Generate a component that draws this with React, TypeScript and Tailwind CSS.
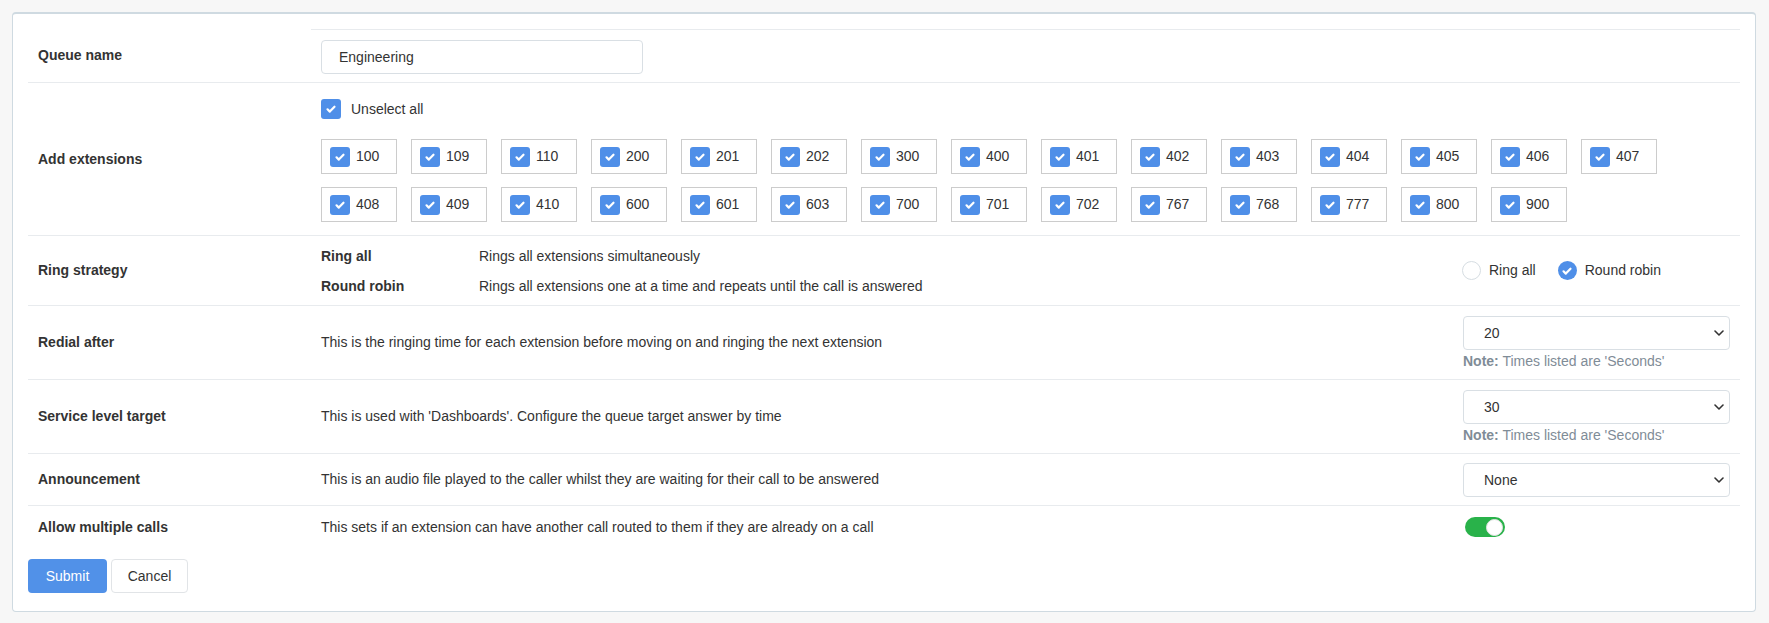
import { useState } from "react"

const extensions = [
  "100", "109", "110", "200", "201", "202", "300", "400", "401", "402", "403", "404", "405", "406", "407",
  "408", "409", "410", "600", "601", "603", "700", "701", "702", "767", "768", "777", "800", "900",
]

function Tick({ className = "w-[12px] h-[12px]" }: { className?: string }) {
  return (
    <svg viewBox="0 0 12 12" className={className} fill="none">
      <path d="M2.5 6.3l2.3 2.3 4.7-4.9" stroke="white" strokeWidth="2.2" strokeLinecap="round" strokeLinejoin="round" />
    </svg>
  )
}

function Box() {
  return (
    <span className="w-[20px] h-[20px] rounded-[3px] bg-[#4f8fe8] flex items-center justify-center shrink-0">
      <Tick />
    </span>
  )
}

function Chevron() {
  return (
    <svg viewBox="0 0 10 6" className="w-[10px] h-[6px] absolute right-[6px] top-1/2 -translate-y-1/2 pointer-events-none" fill="none">
      <path d="M1 1l4 4 4-4" stroke="#333" strokeWidth="1.6" strokeLinecap="round" strokeLinejoin="round" />
    </svg>
  )
}

function Select({ value }: { value: string }) {
  return (
    <div className="relative w-full">
      <div className="h-[34px] w-full border border-[#d9dfe4] rounded-[4px] bg-white pl-[20px] flex items-center text-[14px] text-[#333]">
        {value}
      </div>
      <Chevron />
    </div>
  )
}

function Note() {
  return (
    <p className="mt-[2px] text-[14px] leading-[18px] text-[#7f8c97]">
      <span className="font-bold">Note:</span> Times listed are 'Seconds'
    </p>
  )
}

const rowCls = "grid grid-cols-[283px_1fr_287px] border-b border-[#e8ebee]"
const labelCls = "px-[10px] flex items-center font-bold text-[14px] text-[#333]"
const descCls = "px-[10px] flex items-center text-[14px] text-[#333]"

function Radio({ on }: { on: boolean }) {
  return on ? (
    <span className="w-[19px] h-[19px] rounded-full bg-[#4f8fe8] flex items-center justify-center"><Tick /></span>
  ) : (
    <span className="w-[19px] h-[19px] rounded-full border border-[#d6dde2] bg-white" />
  )
}

export default function App() {
  const [strategy, setStrategy] = useState("round")
  const [multi, setMulti] = useState(true)

  return (
    <div className="min-h-[623px] bg-[#f7f7f7] p-[12px] pr-[13px] font-['Liberation_Sans',Arial,sans-serif]">
      <div className="bg-white border border-[#cfdae1] border-t-2 rounded-[4px] px-[15px] pt-[15px] pb-[18px]">
        {/* Queue name */}
        <div className="grid grid-cols-[283px_1fr_287px] border-b border-[#e8ebee]">
          <div className={labelCls}>Queue name</div>
          <div className="col-span-2 border-t border-[#e8ebee] px-[10px] pt-[10px] pb-[8px]">
            <div className="w-[322px] h-[34px] border border-[#d9dfe4] rounded-[4px] pl-[17px] flex items-center text-[14px] text-[#333]">
              Engineering
            </div>
          </div>
        </div>

        {/* Add extensions */}
        <div className={rowCls}>
          <div className={labelCls}>Add extensions</div>
          <div className="col-span-2 px-[10px] pt-[16px] pb-[13px]">
            <label className="flex items-center gap-[10px] text-[14px] text-[#333] h-[20px]">
              <Box />
              Unselect all
            </label>
            <div className="flex flex-wrap gap-x-[14px] gap-y-[13px] mt-[20px]">
              {extensions.map(ext => (
                <div key={ext} className="w-[76px] h-[35px] border border-[#cccccc] flex items-center pl-[8px] gap-[6px] text-[14px] text-[#333]">
                  <Box />
                  {ext}
                </div>
              ))}
            </div>
          </div>
        </div>

        {/* Ring strategy */}
        <div className={rowCls}>
          <div className={labelCls}>Ring strategy</div>
          <div className="px-[10px] pt-[10px] pb-[9px] flex flex-col gap-[10px] text-[14px] text-[#333]">
            <div className="flex items-center h-[20px]">
              <span className="w-[158px] font-bold">Ring all</span>
              <span>Rings all extensions simultaneously</span>
            </div>
            <div className="flex items-center h-[20px]">
              <span className="w-[158px] font-bold">Round robin</span>
              <span>Rings all extensions one at a time and repeats until the call is answered</span>
            </div>
          </div>
          <div className="px-[9px] flex items-center gap-[8px] text-[14px] text-[#333]">
            <button onClick={() => setStrategy("all")} className="flex items-center gap-[8px]">
              <Radio on={strategy === "all"} />
              Ring all
            </button>
            <button onClick={() => setStrategy("round")} className="flex items-center gap-[8px] ml-[14px]">
              <Radio on={strategy === "round"} />
              Round robin
            </button>
          </div>
        </div>

        {/* Redial after */}
        <div className={rowCls}>
          <div className={labelCls}>Redial after</div>
          <div className={descCls}>This is the ringing time for each extension before moving on and ringing the next extension</div>
          <div className="px-[10px] pt-[10px] pb-[9px]">
            <Select value="20" />
            <Note />
          </div>
        </div>

        {/* Service level target */}
        <div className={rowCls}>
          <div className={labelCls}>Service level target</div>
          <div className={descCls}>This is used with 'Dashboards'. Configure the queue target answer by time</div>
          <div className="px-[10px] pt-[10px] pb-[9px]">
            <Select value="30" />
            <Note />
          </div>
        </div>

        {/* Announcement */}
        <div className={rowCls}>
          <div className={labelCls}>Announcement</div>
          <div className={descCls}>This is an audio file played to the caller whilst they are waiting for their call to be answered</div>
          <div className="px-[10px] pt-[9px] pb-[8px]">
            <Select value="None" />
          </div>
        </div>

        {/* Allow multiple calls */}
        <div className="grid grid-cols-[283px_1fr_287px]">
          <div className={labelCls}>Allow multiple calls</div>
          <div className={descCls}>This sets if an extension can have another call routed to them if they are already on a call</div>
          <div className="px-[12px] py-[11px] flex items-center">
            <button
              onClick={() => setMulti(m => !m)}
              className={`w-[40px] h-[20px] rounded-full flex items-center px-[2px] ${multi ? "bg-[#29b24a] justify-end" : "bg-[#d6dde2] justify-start"}`}
            >
              <span className="w-[17px] h-[17px] rounded-full bg-white border border-[#e3e3e3]" />
            </button>
          </div>
        </div>

        {/* Actions */}
        <div className="flex gap-[4px] mt-[11px]">
          <button className="w-[79px] h-[34px] rounded-[4px] bg-[#5191e8] text-white text-[14px]">Submit</button>
          <button className="w-[77px] h-[34px] rounded-[4px] bg-white border border-[#e1e4e7] text-[#333] text-[14px]">Cancel</button>
        </div>
      </div>
    </div>
  )
}
